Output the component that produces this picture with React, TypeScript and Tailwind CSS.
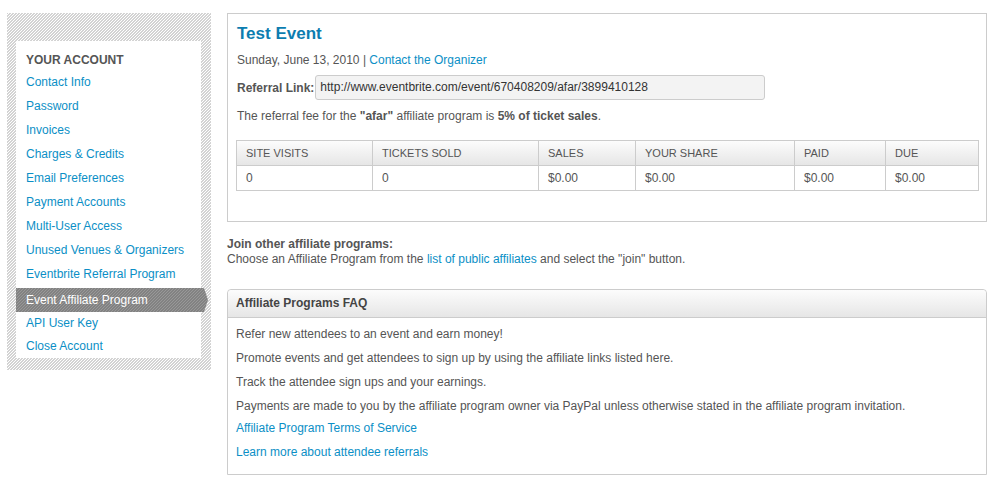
const NAV = [
  'Contact Info',
  'Password',
  'Invoices',
  'Charges & Credits',
  'Email Preferences',
  'Payment Accounts',
  'Multi-User Access',
  'Unused Venues & Organizers',
  'Eventbrite Referral Program',
];

const COLS = [
  { label: 'SITE VISITS', value: '0' },
  { label: 'TICKETS SOLD', value: '0' },
  { label: 'SALES', value: '$0.00' },
  { label: 'YOUR SHARE', value: '$0.00' },
  { label: 'PAID', value: '$0.00' },
  { label: 'DUE', value: '$0.00' },
];

const FAQ = [
  'Refer new attendees to an event and earn money!',
  'Promote events and get attendees to sign up by using the affiliate links listed here.',
  'Track the attendee sign ups and your earnings.',
  'Payments are made to you by the affiliate program owner via PayPal unless otherwise stated in the affiliate program invitation.',
];

function Sidebar() {
  return (
    <div className="w-[204px] shrink-0 self-start mt-[13px] pt-[28px] pl-[9px] pr-[10px] pb-[12px] bg-[linear-gradient(135deg,#d3d3d3_16.67%,#ffffff_16.67%,#ffffff_50%,#d3d3d3_50%,#d3d3d3_66.67%,#ffffff_66.67%)] bg-[length:3px_3px]">
      <div className="bg-white pt-[11px]">
        <div className="pl-[10px] h-[16px] leading-[16px] font-bold text-[#555]">YOUR ACCOUNT</div>
        <ul className="mt-[2px]">
          {NAV.map((item) => (
            <li key={item} className="pl-[10px] h-[24px] leading-[24px] text-[#0b8fc6]">
              {item}
            </li>
          ))}
          {/* active item, arrow pokes out past the white box */}
          <li className="mt-[2px] w-[192px] h-[24px] leading-[24px] pl-[10px] text-white bg-[linear-gradient(135deg,#828282_16.67%,#989898_16.67%,#989898_50%,#828282_50%,#828282_66.67%,#989898_66.67%)] bg-[length:3px_3px] [clip-path:polygon(0_0,188px_0,192px_50%,188px_100%,0_100%)]">
            Event Affiliate Program
          </li>
          <li className="pl-[10px] h-[22px] leading-[22px] text-[#0b8fc6]">API User Key</li>
          <li className="pl-[10px] h-[24px] leading-[24px] text-[#0b8fc6]">Close Account</li>
        </ul>
      </div>
    </div>
  );
}

function StatsTable() {
  return (
    <div className="mt-[15px] ml-[-1px] w-[743px] grid grid-cols-[136px_166px_97px_159px_91px_93px] border-l border-t border-[#cccccc]">
      {COLS.map((c) => (
        <div
          key={c.label}
          className="h-[25px] leading-[24px] pl-[9px] border-r border-b border-[#cccccc] text-[11px] text-[#555] bg-[linear-gradient(#fcfcfc,#e6e6e6)]"
        >
          {c.label}
        </div>
      ))}
      {COLS.map((c) => (
        <div key={c.label} className="h-[25px] leading-[24px] pl-[9px] border-r border-b border-[#cccccc]">
          {c.value}
        </div>
      ))}
    </div>
  );
}

function EventPanel() {
  return (
    <div className="border border-[#cccccc] pt-[10px] pl-[9px] pb-[30px]">
      <h1 className="text-[17px] leading-[20px] font-bold text-[#0c7db0]">Test Event</h1>
      <div className="mt-[7px] leading-[18px]">
        Sunday, June 13, 2010 | <span className="text-[#0b8fc6]">Contact the Organizer</span>
      </div>
      <div className="mt-[6px] flex items-center gap-[1px]">
        <span className="font-bold">Referral Link:</span>
        <div className="w-[450px] h-[25px] leading-[23px] pl-[4px] border border-[#cccccc] rounded-[3px] bg-[#f3f3f3] text-[#333]">
          http://www.eventbrite.com/event/670408209/afar/3899410128
        </div>
      </div>
      <div className="mt-[7px] leading-[18px]">
        The referral fee for the <b>"afar"</b> affiliate program is <b>5% of ticket sales</b>.
      </div>
      <StatsTable />
    </div>
  );
}

function FaqBox() {
  return (
    <div className="mt-[22px] border border-[#cccccc] rounded-t-[4px]">
      <div className="h-[28px] leading-[27px] pl-[8px] font-bold text-[#444] border-b border-[#cccccc] rounded-t-[4px] bg-[linear-gradient(#fcfcfc,#e6e6e6)]">
        Affiliate Programs FAQ
      </div>
      <div className="pt-[4px] pl-[8px] pb-[10px]">
        {FAQ.map((line) => (
          <p key={line} className="leading-[24px]">
            {line}
          </p>
        ))}
        <p className="mt-[-2px] leading-[24px] text-[#0b8fc6]">Affiliate Program Terms of Service</p>
        <p className="leading-[24px] text-[#0b8fc6]">Learn more about attendee referrals</p>
      </div>
    </div>
  );
}

export default function App() {
  return (
    <div className="w-[998px] h-[489px] bg-white flex gap-[16px] pl-[7px] text-[12px] text-[#555] font-['Liberation_Sans',Arial,sans-serif]">
      <Sidebar />
      <main className="w-[760px] mt-[13px]">
        <EventPanel />
        <div className="mt-[15px] leading-[15px]">
          <div className="font-bold">Join other affiliate programs:</div>
          <div>
            Choose an Affiliate Program from the <span className="text-[#0b8fc6]">list of public affiliates</span> and
            select the "join" button.
          </div>
        </div>
        <FaqBox />
      </main>
    </div>
  );
}
